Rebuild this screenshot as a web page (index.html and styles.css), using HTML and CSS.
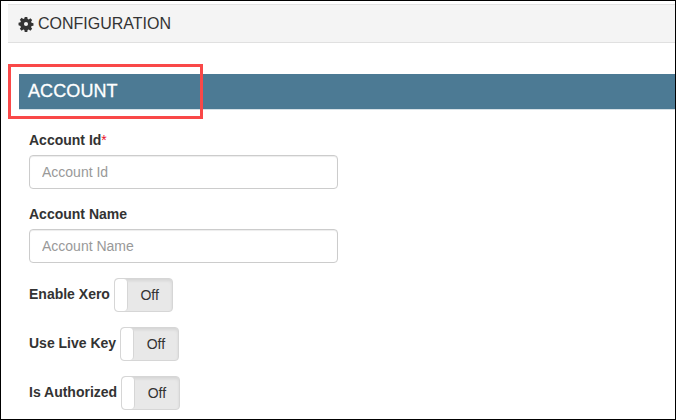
FILE: index.html
```html
<!DOCTYPE html>
<html lang="en">
<head>
<meta charset="utf-8">
<title>Configuration</title>
<link rel="stylesheet" href="styles.css">
</head>
<body>
<div class="frame">
  <header class="page-head">
    <svg class="gear" viewBox="0 0 24 24" aria-hidden="true"><path fill-rule="evenodd" d="M9.800 0h4.400l.6 3.300 1.900.8 2.800-1.900 3.100 3.100-1.900 2.800.8 1.900 3.300.6v4.400l-3.300.6-.8 1.900 1.900 2.800-3.100 3.100-2.800-1.900-1.900.8-.6 3.300H9.800l-.6-3.300-1.900-.8-2.800 1.900-3.100-3.100 1.900-2.800-.8-1.900L-.8 14.200V9.800l3.300-.6.8-1.900-1.900-2.800 3.100-3.100 2.800 1.900 1.900-.8zM12 8.500a3.500 3.500 0 1 0 0 7 3.500 3.500 0 0 0 0-7z"/></svg>
    <span>CONFIGURATION</span>
  </header>
  <section class="account">
    <h2 class="band">ACCOUNT</h2>
    <div class="callout"></div>
    <form class="form">
      <div class="field">
        <label class="label" for="aid">Account Id<span class="req">*</span></label>
        <input class="input" id="aid" type="text" placeholder="Account Id">
      </div>
      <div class="field">
        <label class="label" for="aname">Account Name</label>
        <input class="input" id="aname" type="text" placeholder="Account Name">
      </div>
      <div class="switch-row">
        <span class="label">Enable Xero</span>
        <div class="switch"><span class="knob"></span><span class="state">Off</span></div>
      </div>
      <div class="switch-row">
        <span class="label">Use Live Key</span>
        <div class="switch"><span class="knob"></span><span class="state">Off</span></div>
      </div>
      <div class="switch-row">
        <span class="label">Is Authorized</span>
        <div class="switch"><span class="knob"></span><span class="state">Off</span></div>
      </div>
    </form>
  </section>
</div>
</body>
</html>
```
FILE: styles.css
```css
* { box-sizing: border-box; }
html, body { margin: 0; padding: 0; }
body { width: 676px; height: 420px; overflow: hidden; background: #fff; font-family: "Liberation Sans", Arial, sans-serif; color: #333; }
.frame { position: relative; width: 676px; height: 420px; overflow: hidden; padding: 4px 1px 0 1px; }
.frame::after { content: ""; position: absolute; inset: 0; border: 1px solid #000; pointer-events: none; }
.page-head { display: flex; align-items: center; gap: 5px; height: 39px; margin-left: 7px; padding-left: 11px; background: #f4f4f4; border-top: 1px solid #e3e3e3; border-bottom: 1px solid #e0e0e0; font-size: 16px; color: #333; }
.gear { width: 14px; height: 14px; fill: #333; flex: none; overflow: visible; }
.account { position: relative; padding: 31px 0 0 18px; }
.band { margin: 0; height: 36px; padding-left: 9px; background: #4c7a94; border-bottom: 1px solid #d5e0e6; color: #fff; font-size: 18px; font-weight: 400; line-height: 34px; letter-spacing: .1px; -webkit-text-stroke: 0.3px #fff; }
.callout { position: absolute; left: 7px; top: 21px; width: 195px; height: 55px; border: 3px solid #f94848; }
.form { padding: 20px 0 0 10px; }
.field { margin-bottom: 15px; }
.label { display: block; font-size: 14px; font-weight: 700; line-height: 20px; color: #333; }
.req { color: #e8112d; font-weight: 400; }
.field .label { margin-bottom: 5px; }
.input { display: block; width: 309px; height: 34px; padding: 0 12px; border: 1px solid #ccc; border-radius: 4px; background: #fff; font: 14px "Liberation Sans", Arial, sans-serif; box-shadow: inset 0 1px 1px rgba(0,0,0,.075); }
.input::placeholder { color: #999; opacity: 1; }
.switch-row { display: flex; align-items: center; gap: 4.25px; height: 34px; margin-bottom: 15px; }
.switch-row .label { margin-bottom: 2px; }
.switch { display: flex; width: 59px; height: 34px; border: 1px solid #d6d6d6; border-radius: 4px; background: #e8e8e8; box-shadow: inset 0 2px 3px rgba(0,0,0,.08); overflow: hidden; }
.knob { width: 13px; background: #fff; border-right: 1px solid #d6d6d6; border-radius: 4px; }
.state { flex: 1; text-align: center; font-size: 14px; line-height: 32px; color: #333; padding-right: 1px; }
```
